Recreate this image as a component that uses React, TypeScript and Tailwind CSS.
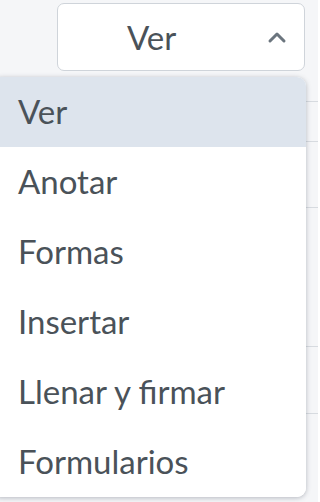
import { useState } from "react"

const items = ["Ver", "Anotar", "Formas", "Insertar", "Llenar y firmar", "Formularios"]

// rows of the page content that sits behind the open menu
const rows = ["h-[27px]", "h-[40px]", "h-[66px]", "h-[139px]", "h-[67px]"]

export default function App() {
  const [selected, setSelected] = useState("Ver")

  return (
    <div
      className="relative w-[318px] h-[502px] overflow-hidden bg-[#f5f6f8] text-[#4a5259]"
      style={{ fontFamily: "Lato, 'Noto Sans', sans-serif" }}
    >
      <div className="flex flex-col">
        <div className="h-[75px] pt-[3px] pl-[57px]">
          <button className="flex items-center w-[248px] h-[68px] rounded-[7px] border-[1.5px] border-[#cfd4da] bg-white pl-[69px] pr-[17px]">
            <span className="flex-1 text-left text-[33px] leading-none">{selected}</span>
            <svg width="20" height="14" viewBox="0 0 20 14" fill="none">
              <path d="M3 11 L10 4 L17 11" stroke="#6b757e" strokeWidth="3" strokeLinecap="round" strokeLinejoin="round" />
            </svg>
          </button>
        </div>
        {rows.map((h, i) => (
          <div key={i} className={`${h} border-b border-[#d7dbe0]`} />
        ))}
      </div>

      <div className="absolute left-[-8px] top-[77px] w-[314px] overflow-hidden rounded-[9px] bg-white shadow-[0_1px_5px_rgba(60,70,85,0.35)]">
        {items.map((item) => (
          <div
            key={item}
            onClick={() => setSelected(item)}
            className={`flex items-center h-[70px] pl-[26px] text-[33px] ${
              item === selected ? "bg-[#dde4ed]" : "bg-white"
            }`}
          >
            {item}
          </div>
        ))}
      </div>
    </div>
  )
}
